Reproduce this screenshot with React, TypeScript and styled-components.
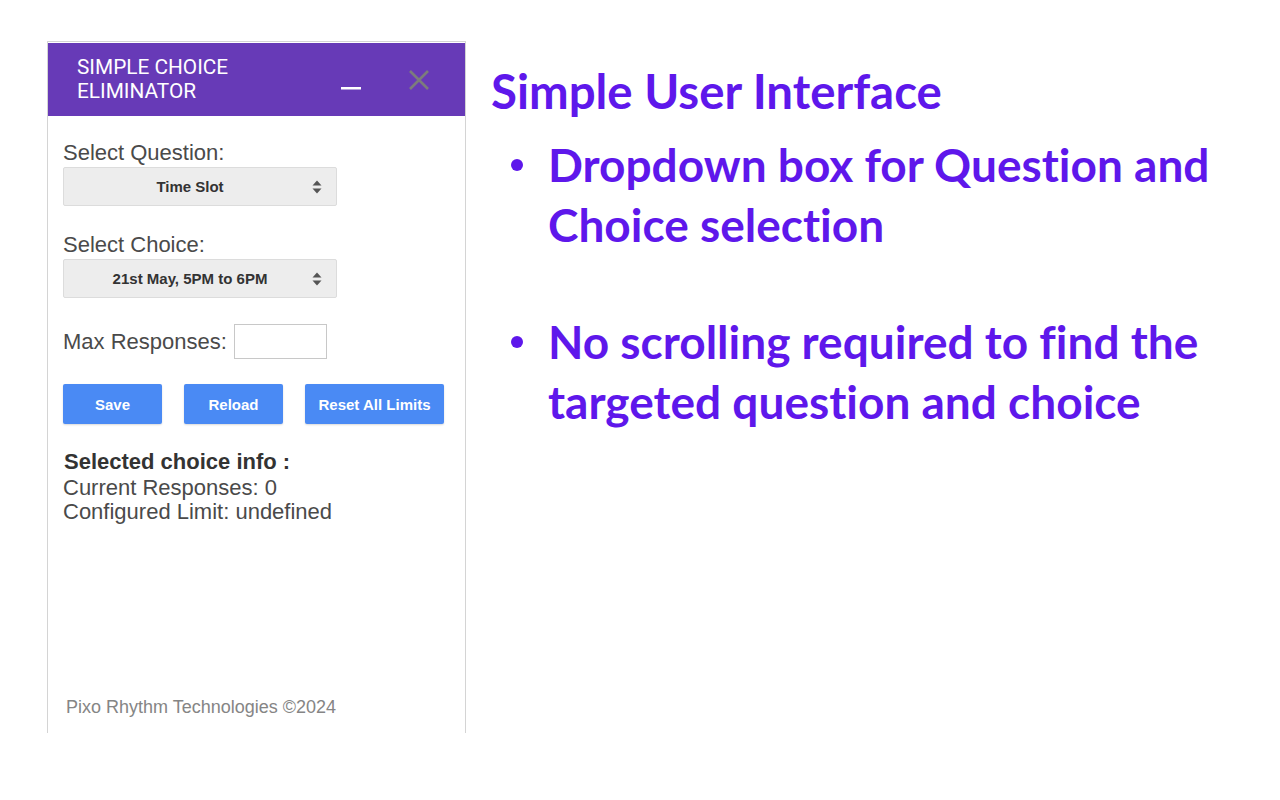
import React from "react";
import styled, { createGlobalStyle } from "styled-components";

const GlobalStyle = createGlobalStyle`
	html, body {
		margin: 0;
		padding: 0;
		background: #ffffff;
	}
	* {
		box-sizing: border-box;
	}
`;

const Page = styled.div`
	display: flex;
	align-items: flex-start;
	width: 1280px;
	height: 800px;
	background: #ffffff;
	overflow: hidden;
`;

const Panel = styled.div`
	display: flex;
	flex-direction: column;
	width: 419px;
	height: 692px;
	margin: 41px 0 0 47px;
	border: 1px solid #d4d4d4;
	border-bottom: none;
	padding-top: 1px;
	background: #ffffff;
	font-family: "Liberation Sans", Arial, sans-serif;
`;

const Header = styled.div`
	display: flex;
	align-items: center;
	height: 73px;
	padding: 0 34px 0 29px;
	background: #673ab7;
`;

const Title = styled.div`
	flex: 1;
	margin-top: -1px;
	font-family: Roboto, "Liberation Sans", sans-serif;
	font-size: 20.8px;
	line-height: 24px;
	color: #ffffff;
`;

const HeaderButton = styled.button`
	display: flex;
	align-items: center;
	justify-content: center;
	width: 24px;
	height: 24px;
	padding: 0;
	border: none;
	background: transparent;
	margin-left: ${(props: { $gap: number }) => props.$gap}px;
`;

const Body = styled.div`
	display: flex;
	flex: 1;
	flex-direction: column;
	padding: 25px 20px 14px 15px;
`;

const Label = styled.div`
	font-size: 22px;
	line-height: 24px;
	color: #4a4a4a;
`;

const SelectBox = styled.div`
	position: relative;
	display: flex;
	align-items: center;
	justify-content: center;
	width: 274px;
	height: 39px;
	margin: 2px 0 27px;
	border: 1px solid #dcdcdc;
	border-radius: 2px;
	background: #ededed;
	font-size: 15px;
	font-weight: 700;
	color: #333333;
	padding-right: 20px;
`;

const Arrows = styled.svg`
	position: absolute;
	right: 14px;
	top: 50%;
	transform: translateY(-50%);
`;

const InlineRow = styled.div`
	display: flex;
	align-items: center;
	gap: 7px;
	margin-top: -1px;
`;

const NumberInput = styled.input`
	width: 93px;
	height: 35px;
	border: 1px solid #c8c8c8;
	background: #ffffff;
	font-size: 16px;
	outline: none;
`;

const ButtonRow = styled.div`
	display: flex;
	gap: 22px;
	margin-top: 25px;
`;

const ActionButton = styled.button`
	width: ${(props: { $width: number }) => props.$width}px;
	height: 40px;
	padding: 0;
	border: none;
	border-radius: 2px;
	background: #4a8af4;
	color: #ffffff;
	font-family: "Liberation Sans", Arial, sans-serif;
	font-size: 15px;
	font-weight: 700;
	box-shadow: 0 1px 2px rgba(0, 0, 0, 0.15);
`;

const Info = styled.div`
	margin: 26px 0 2px;
	padding-left: 1px;
	font-size: 22px;
	font-weight: 700;
	line-height: 24px;
	color: #333333;
`;

const Footer = styled.div`
	margin-top: auto;
	padding-left: 3px;
	font-size: 18px;
	line-height: 24px;
	color: #858585;
`;

const Slide = styled.div`
	display: flex;
	flex-direction: column;
	margin: 61px 0 0 25px;
	font-family: Lato, "Noto Sans", sans-serif;
	font-weight: 700;
	font-variant-ligatures: none;
	color: #5e17eb;
`;

const Heading = styled.h1`
	margin: 0;
	font-size: 47.4px;
	line-height: 60px;
	font-weight: 700;
`;

const Points = styled.ul`
	margin: 14px 0 0;
	padding: 0;
	list-style: none;
	display: flex;
	flex-direction: column;
	gap: 57px;
`;

const Point = styled.li`
	position: relative;
	padding-left: 57px;
	font-size: 46px;
	line-height: 60px;
	white-space: nowrap;

	&::before {
		content: "";
		position: absolute;
		left: 20px;
		top: 24px;
		width: 12px;
		height: 12px;
		border-radius: 50%;
		background: #5e17eb;
	}
`;

function UpDown() {
	return (
		<Arrows width="10" height="14" viewBox="0 0 10 14">
			<path d="M5 0.5 L9.5 5.5 H0.5 Z" fill="#555" />
			<path d="M5 13.5 L9.5 8.5 H0.5 Z" fill="#555" />
		</Arrows>
	);
}

export default function App() {
	return (
		<>
			<GlobalStyle />
			<Page>
				<Panel>
					<Header>
						<Title>
							SIMPLE CHOICE
							<br />
							ELIMINATOR
						</Title>
						<HeaderButton $gap={0} aria-label="minimize">
							<svg width="22" height="24" viewBox="0 0 22 24">
								<rect x="1" y="19" width="20" height="2.5" fill="#ffffff" />
							</svg>
						</HeaderButton>
						<HeaderButton $gap={44} aria-label="close">
							<svg width="22" height="22" viewBox="0 0 22 22">
								<path
									d="M2 2 L20 20 M20 2 L2 20"
									stroke="#7c7c7c"
									strokeWidth="2.6"
								/>
							</svg>
						</HeaderButton>
					</Header>
					<Body>
						<Label>Select Question:</Label>
						<SelectBox>
							Time Slot
							<UpDown />
						</SelectBox>
						<Label>Select Choice:</Label>
						<SelectBox>
							21st May, 5PM to 6PM
							<UpDown />
						</SelectBox>
						<InlineRow>
							<Label>Max Responses:</Label>
							<NumberInput type="text" />
						</InlineRow>
						<ButtonRow>
							<ActionButton $width={99}>Save</ActionButton>
							<ActionButton $width={99}>Reload</ActionButton>
							<ActionButton $width={139}>Reset All Limits</ActionButton>
						</ButtonRow>
						<Info>Selected choice info :</Info>
						<Label>Current Responses: 0</Label>
						<Label>Configured Limit: undefined</Label>
						<Footer>Pixo Rhythm Technologies ©2024</Footer>
					</Body>
				</Panel>
				<Slide>
					<Heading>Simple User Interface</Heading>
					<Points>
						<Point>
							Dropdown box for Question and
							<br />
							Choice selection
						</Point>
						<Point>
							No scrolling required to find the
							<br />
							targeted question and choice
						</Point>
					</Points>
				</Slide>
			</Page>
		</>
	);
}
